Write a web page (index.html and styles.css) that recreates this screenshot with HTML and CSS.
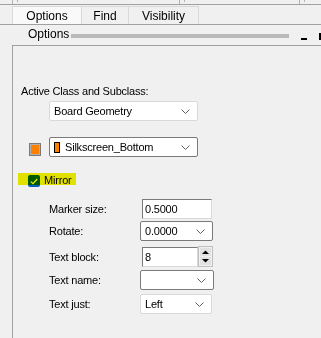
FILE: index.html
```html
<!DOCTYPE html>
<html lang="en">
<head>
  <meta charset="UTF-8">
  <title>Options</title>
  <link rel="stylesheet" href="styles.css">
</head>
<body>
  <div class="strip">
    <div class="cell cell-a"></div>
    <div class="cell cell-b"><span class="tick"></span></div>
    <div class="cell cell-c"><span class="tick"></span></div>
    <div class="cell cell-d"><span class="tick"></span></div>
  </div>

  <div class="tabs">
    <div class="tab active">Options</div>
    <div class="tab">Find</div>
    <div class="tab">Visibility</div>
  </div>

  <div class="titlebar">
    <span class="title">Options</span>
    <span class="grip"></span>
    <span class="minimize"></span>
    <span class="pin"></span>
  </div>

  <div class="panel">
    <div class="caption">Active Class and Subclass:</div>

    <div class="combo wide flat">
      <span class="value">Board Geometry</span>
      <svg class="chevron" width="9" height="5" viewBox="0 0 9 5"><path d="M0.5 0.5 L4.5 4.5 L8.5 0.5" fill="none" stroke="#606060"/></svg>
    </div>

    <div class="subclass-row">
      <span class="swatch"></span>
      <div class="combo wide dark">
        <span class="chip"></span>
        <span class="value">Silkscreen_Bottom</span>
        <svg class="chevron" width="9" height="5" viewBox="0 0 9 5"><path d="M0.5 0.5 L4.5 4.5 L8.5 0.5" fill="none" stroke="#606060"/></svg>
      </div>
    </div>

    <div class="mirror">
      <span class="checkbox">
        <svg width="8" height="7" viewBox="0 0 8 7"><path d="M0.8 3.6 L3 5.6 L7.2 1" fill="none" stroke="#fff" stroke-width="1.2"/></svg>
      </span>
      <span class="mirror-label">Mirror</span>
      <span class="highlight"></span>
    </div>

    <div class="fields">
      <div class="field row-marker">
        <span class="label">Marker size:</span>
        <div class="edit w70">0.5000</div>
      </div>
      <div class="field row-rotate">
        <span class="label">Rotate:</span>
        <div class="combo w73 dark">
          <span class="value">0.0000</span>
          <svg class="chevron" width="9" height="5" viewBox="0 0 9 5"><path d="M0.5 0.5 L4.5 4.5 L8.5 0.5" fill="none" stroke="#606060"/></svg>
        </div>
      </div>
      <div class="field row-block">
        <span class="label">Text block:</span>
        <div class="spin-wrap">
          <div class="edit w56">8</div>
          <div class="spinner">
            <span class="spin-btn"><svg width="7" height="4" viewBox="0 0 7 4"><path d="M0 4 L3.5 0.5 L7 4 Z" fill="#000"/></svg></span>
            <span class="spin-btn"><svg width="7" height="4" viewBox="0 0 7 4"><path d="M0 0 L3.5 3.5 L7 0 Z" fill="#000"/></svg></span>
          </div>
        </div>
      </div>
      <div class="field row-name">
        <span class="label">Text name:</span>
        <div class="combo w74 dark">
          <span class="value"></span>
          <svg class="chevron" width="9" height="5" viewBox="0 0 9 5"><path d="M0.5 0.5 L4.5 4.5 L8.5 0.5" fill="none" stroke="#606060"/></svg>
        </div>
      </div>
      <div class="field row-just">
        <span class="label">Text just:</span>
        <div class="combo w72 flat">
          <span class="value">Left</span>
          <svg class="chevron" width="9" height="5" viewBox="0 0 9 5"><path d="M0.5 0.5 L4.5 4.5 L8.5 0.5" fill="none" stroke="#606060"/></svg>
        </div>
      </div>
    </div>
  </div>
</body>
</html>
```

FILE: styles.css
```css
body {
  margin: 0;
  background-color: #f0f0f0;
  font-family: "Liberation Sans", Arial, sans-serif;
  font-size: 11px;
  letter-spacing: -0.2px;
  color: #000;
  height: 338px;
  overflow: hidden;
}

/* strip of the window above */
.strip {
  display: flex;
  height: 4px;
  border-bottom: 1px solid #a0a0a0;
}

.cell {
  position: relative;
  border-right: 1px solid #b4b4b4;
}

.cell-a { width: 12px; }
.cell-b { width: 166px; }
.cell-c { width: 119px; }
.cell-d { flex: 1; border-right: none; }

.tick {
  position: absolute;
  left: 4px;
  top: 0;
  width: 1px;
  height: 2px;
  background-color: #b4b4b4;
}

/* tabs */
.tabs {
  display: flex;
  margin-top: 1px;
  padding-left: 12px;
  height: 18px;
  border-bottom: 1px solid #a0a0a0;
  font-size: 12px;
  letter-spacing: 0;
}

.tab {
  padding: 2px 0 0;
  text-align: center;
  border: 1px solid #d9d9d9;
  border-bottom: none;
  margin-left: -1px;
  line-height: 15px;
}

.tab:nth-child(1) { width: 68px; margin-left: 0; }
.tab:nth-child(2) { width: 46px; }
.tab:nth-child(3) { width: 69px; }

.tab.active {
  background-color: #f9f9f9;
}

/* docked window title */
.titlebar {
  display: flex;
  align-items: center;
  height: 20px;
  padding-left: 28px;
  font-size: 12px;
  letter-spacing: 0;
}

.title {
  margin-top: -2px;
}

.grip {
  width: 218px;
  height: 4px;
  margin-left: 2px;
  background-color: #b9b9b9;
  margin-top: 1px;
}

.minimize {
  width: 6px;
  height: 2px;
  margin-left: 12px;
  margin-top: 8px;
  background-color: #000;
}

.pin {
  width: 2px;
  height: 7px;
  margin-left: 12px;
  margin-top: 2px;
  background-color: #000;
}

/* panel body */
.panel {
  box-sizing: border-box;
  margin-left: 12px;
  border-top: 1px solid #a0a0a0;
  border-left: 1px solid #a0a0a0;
  padding: 38px 0 0 8px;
  height: 293px;
}

.caption {
  line-height: 14px;
}

.combo {
  display: flex;
  align-items: center;
  box-sizing: border-box;
  height: 20px;
  background-color: #fff;
  border-radius: 2px;
  padding: 0 7px 0 4px;
}

.combo.flat { border: 1px solid #d9d9d9; }
.combo.dark { border: 1px solid #7a7a7a; }

.combo .value {
  flex: 1;
  white-space: nowrap;
}

.chevron {
  flex: none;
}

.wide {
  width: 149px;
  margin-left: 28px;
}

.panel > .combo.wide {
  margin-top: 3px;
}

.subclass-row {
  display: flex;
  align-items: center;
  margin-top: 16px;
  padding-left: 8px;
}

.subclass-row .wide {
  margin-left: 8px;
}

.swatch {
  box-sizing: border-box;
  width: 12px;
  height: 13px;
  border: 1px solid #7a7a7a;
  box-shadow: inset 0 0 0 1px #b0b0b0;
  background-color: #ff8000;
  margin-top: 4px;
}

.chip {
  box-sizing: border-box;
  width: 6px;
  height: 11px;
  border: 1px solid #000;
  background-color: #ff8000;
  margin-right: 5px;
}

/* mirror check with highlighter mark */
.mirror {
  position: relative;
  display: flex;
  align-items: center;
  margin-top: 16px;
  padding-left: 7px;
  height: 13px;
}

.checkbox {
  display: flex;
  align-items: center;
  justify-content: center;
  width: 12px;
  height: 12px;
  border-radius: 2px;
  background-color: #005fb8;
  margin-top: 3px;
}

.mirror-label {
  margin-left: 4px;
}

.highlight {
  position: absolute;
  left: -3px;
  top: 0;
  width: 58px;
  height: 12px;
  background-color: #f0f000;
  mix-blend-mode: multiply;
}

/* field grid */
.fields {
  margin-top: 13px;
  padding-left: 28px;
}

.field {
  display: grid;
  grid-template-columns: 91px auto;
  align-items: center;
}

.row-rotate { margin-top: 2px; }
.row-block { margin-top: 5px; }
.row-name { margin-top: 3px; }
.row-just { margin-top: 4px; }

.edit {
  box-sizing: border-box;
  height: 20px;
  background-color: #fff;
  border: 1px solid #d9d9d9;
  border-top-color: #7a7a7a;
  border-left-color: #7a7a7a;
  padding: 0 2px;
  line-height: 18px;
  margin-left: 2px;
}

.w70 { width: 70px; }
.w56 { width: 56px; }
.w73 { width: 73px; }
.w74 { width: 74px; }
.w72 { width: 72px; }

.spin-wrap {
  display: flex;
  align-items: center;
}

.spinner {
  display: flex;
  flex-direction: column;
  box-sizing: border-box;
  width: 15px;
  height: 21px;
  border: 1px solid #c0c0c0;
  padding: 1px;
  gap: 1px;
}

.spin-btn {
  flex: 1;
  display: flex;
  align-items: center;
  justify-content: center;
  background-color: #e1e1e1;
}
```
